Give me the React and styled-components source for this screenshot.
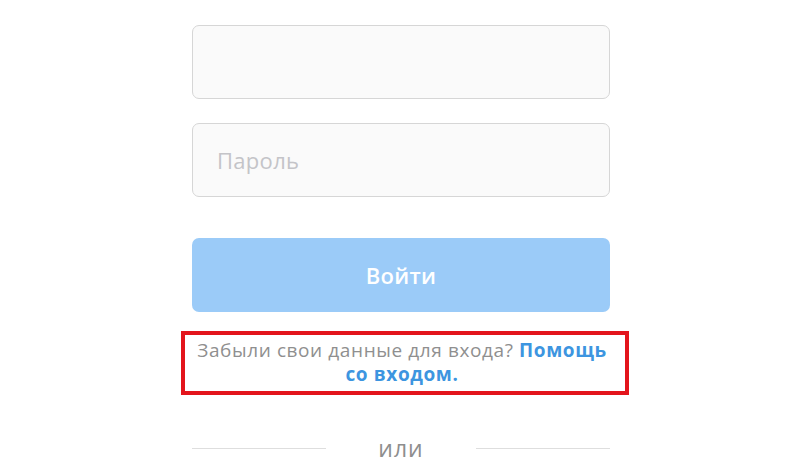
import React from 'react'
import styled, { createGlobalStyle } from 'styled-components'

const GlobalStyle = createGlobalStyle`
  html, body {
    margin: 0;
    padding: 0;
    background: #ffffff;
    font-family: "Open Sans", Roboto, "Liberation Sans", Arial, sans-serif;
  }
`

const Page = styled.div`
  display: flex;
  justify-content: center;
  padding-top: 25px;
  padding-left: 2px;
`

const Form = styled.div`
  width: 418px;
  display: flex;
  flex-direction: column;
`

const Field = styled.div`
  box-sizing: border-box;
  height: 74px;
  margin-bottom: ${p => p.gap || 0}px;
  border: 1px solid #d6d6d6;
  border-radius: 7px;
  background: #fafafa;
  display: flex;
  align-items: center;
  padding-left: 24px;
  font-size: 22px;
  letter-spacing: 0.3px;
  color: #c4c4c8;
`

const LoginButton = styled.div`
  box-sizing: border-box;
  height: 74px;
  border-radius: 7px;
  background: #9bcbf8;
  display: flex;
  align-items: center;
  justify-content: center;
  color: #ffffff;
  font-size: 22px;
  letter-spacing: 0.3px;
  font-weight: 600;
  margin-bottom: 19px;
`

const HelpBox = styled.div`
  box-sizing: border-box;
  width: 448px;
  height: 64px;
  margin-left: -11px;
  border: 4px solid #e3151c;
  display: flex;
  align-items: center;
  justify-content: center;
  text-align: center;
  padding: 0 8px 3px 2px;
  font-size: 19px;
  letter-spacing: 0.6px;
  line-height: 24px;
  color: #8f8f8f;
  margin-bottom: 41px;
`

const HelpLink = styled.span`
  color: #3d95e0;
  font-weight: 700;
`

const Divider = styled.div`
  display: flex;
  align-items: center;
  gap: 52px;
  color: #8e8e8e;
  font-size: 23px;
  letter-spacing: 1px;
  line-height: 24px;
`

const Line = styled.div`
  flex: 1;
  height: 1px;
  background: #dedede;
`

export default function App() {
  return (
    <>
      <GlobalStyle />
      <Page>
        <Form>
          <Field gap={24} />
          <Field gap={41}>Пароль</Field>
          <LoginButton>Войти</LoginButton>
          <HelpBox>
            <div>
              Забыли свои данные для входа? <HelpLink>Помощь</HelpLink>
              <br />
              <HelpLink>со входом.</HelpLink>
            </div>
          </HelpBox>
          <Divider>
            <Line />
            <span>или</span>
            <Line />
          </Divider>
        </Form>
      </Page>
    </>
  )
}
